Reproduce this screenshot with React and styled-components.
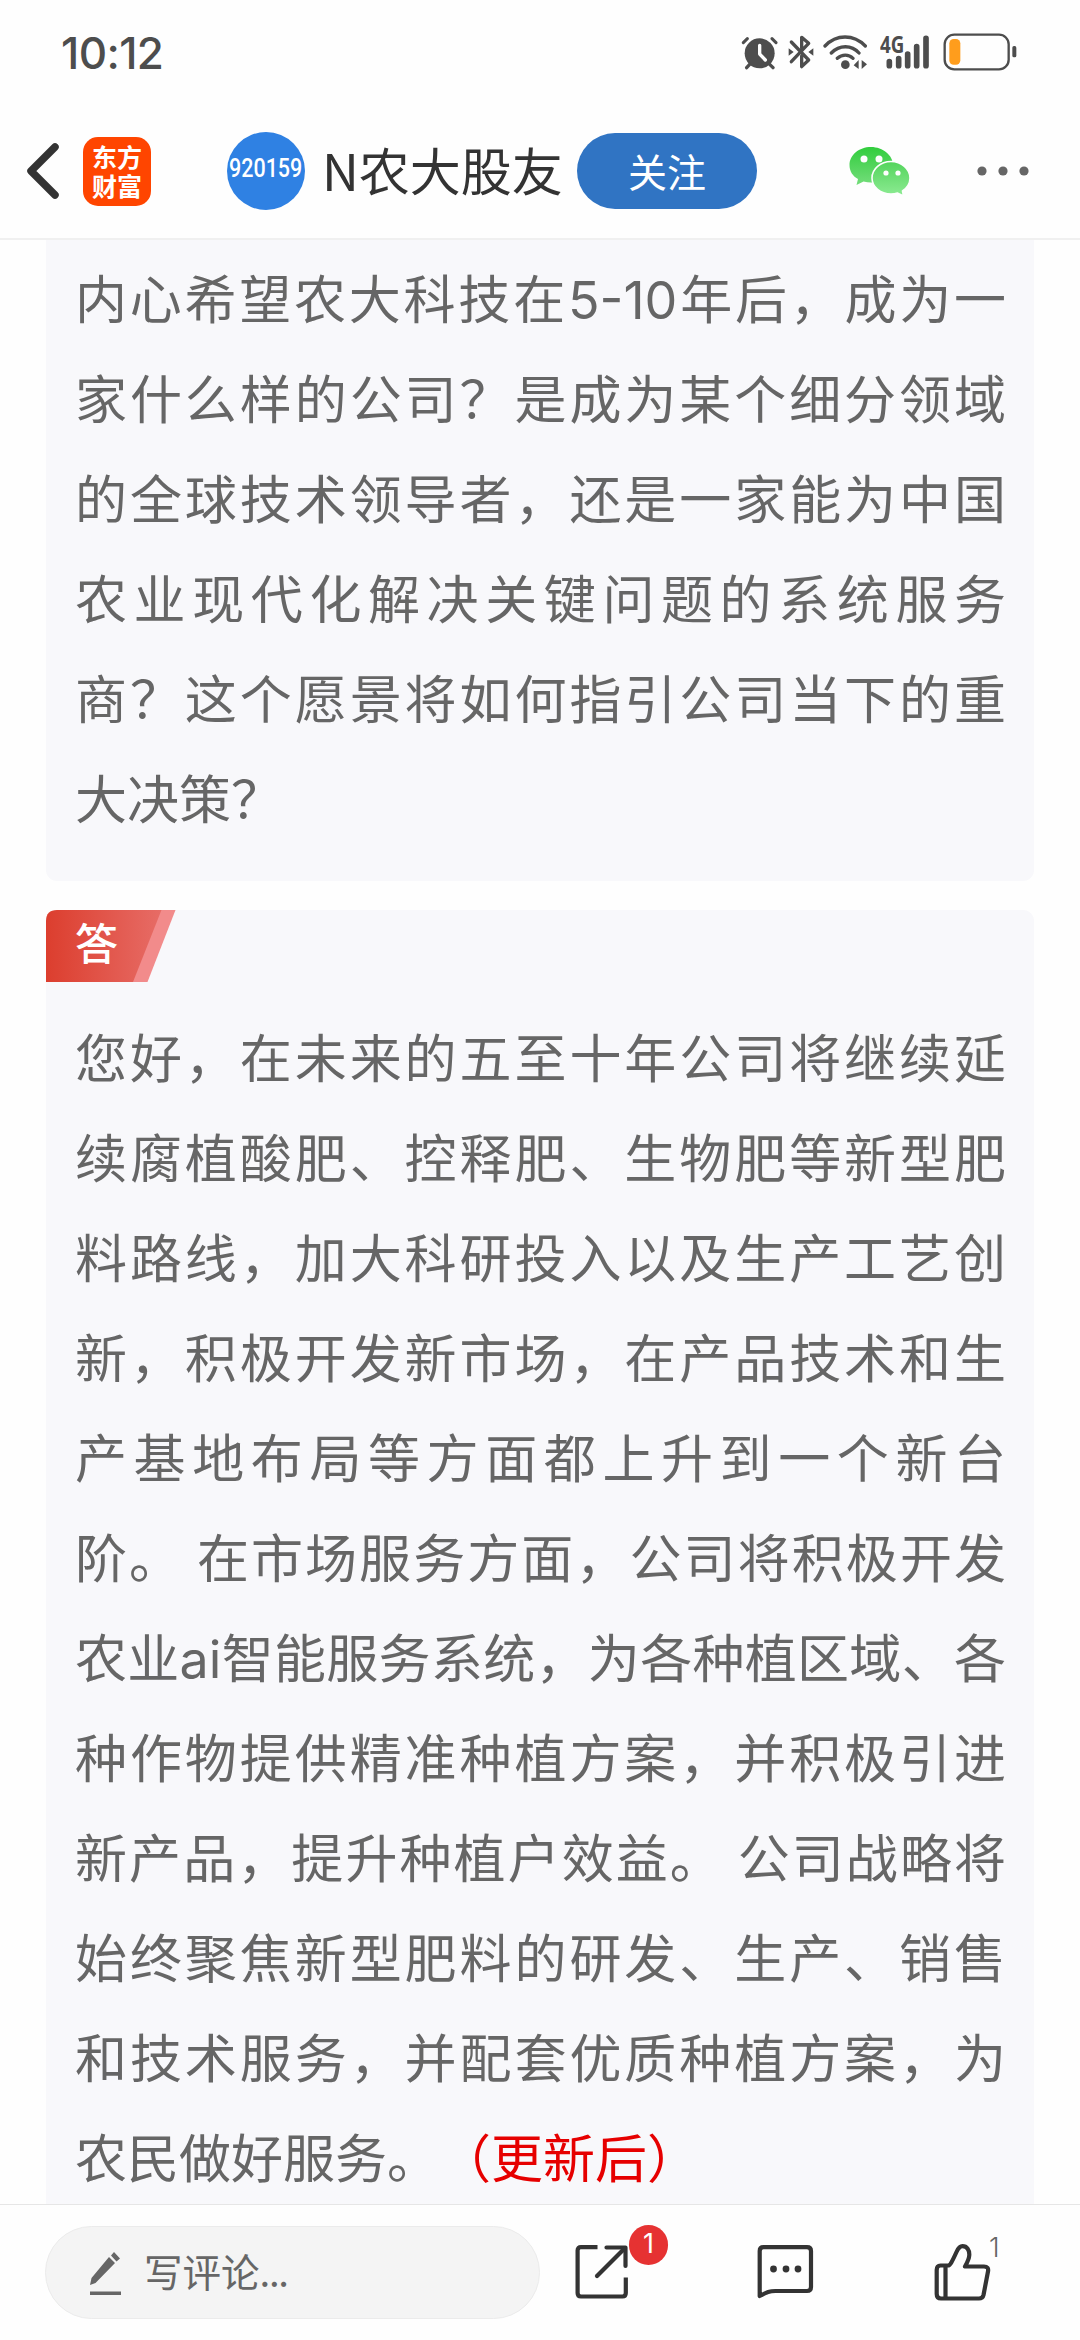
import React from "react"
import styled, { createGlobalStyle } from "styled-components"

const GlobalStyle = createGlobalStyle`
  * {
    box-sizing: border-box;
  }

  body {
    margin: 0;
    background: #fefefe;
    font-family: "Noto Sans CJK SC", "Noto Sans", sans-serif;
    text-spacing-trim: space-all;
  }
`

const Page = styled.div`
  display: flex;
  flex-direction: column;
  width: 1080px;
  height: 2340px;
  overflow: hidden;
  color: #333;
`

const StatusBar = styled.div`
  display: flex;
  align-items: center;
  justify-content: space-between;
  height: 104px;
  padding: 0 63px 0 61px;
`

const Clock = styled.span`
  padding-top: 2px;
  font-family: Inter, sans-serif;
  font-size: 44px;
  font-weight: 500;
  line-height: 60px;
  letter-spacing: -0.6px;
  color: #4d4d4d;
`

const StatusIcons = styled.div`
  display: flex;
  align-items: center;

  svg {
    display: block;
  }
`

const Network = styled.div`
  position: relative;
  margin: 0 14px 0 11px;
`

const NetworkLabel = styled.span`
  position: absolute;
  top: -1px;
  left: 1px;
  font-family: "Open Sans", sans-serif;
  font-size: 24px;
  font-weight: 700;
  line-height: 22px;
  color: #4d4d4d;
  transform: scaleX(0.78);
  transform-origin: left;
`

const Header = styled.header`
  display: flex;
  align-items: center;
  flex-shrink: 0;
  height: 136px;
  padding: 0 50px 0 26px;
  border-bottom: 2px solid #f0f0f0;

  > svg {
    flex-shrink: 0;
  }
`

const Logo = styled.div`
  display: flex;
  flex-direction: column;
  align-items: center;
  justify-content: center;
  width: 68px;
  height: 69px;
  margin-left: 23px;
  border-radius: 15px;
  background: #ff4500;
  color: #fff;
  font-size: 25px;
  font-weight: 700;
  line-height: 29px;
`

const Avatar = styled.div`
  display: flex;
  align-items: center;
  justify-content: center;
  width: 78px;
  height: 78px;
  margin-left: 76px;
  border-radius: 50%;
  background: #2f81e3;
  color: #fff;
`

const StockCode = styled.span`
  font-family: Roboto, sans-serif;
  font-size: 25px;
  font-weight: 500;
  line-height: 26px;
  transform: translateY(-2px) scaleX(0.86);
`

const Title = styled.h1`
  margin: 0 0 4px 17px;
  width: 255px;
  font-size: 51px;
  font-weight: 400;
  line-height: 70px;
  white-space: nowrap;
`

const FollowButton = styled.button`
  width: 180px;
  height: 76px;
  padding: 0 0 3px;
  border: 0;
  border-radius: 38px;
  background: #3074c3;
  color: #fff;
  font-family: inherit;
  font-size: 39px;
  line-height: 70px;
`

const Content = styled.main`
  display: flex;
  flex-direction: column;
  flex: 1;
  gap: 29px;
  min-height: 0;
  padding: 0 46px;
  overflow: hidden;
`

const Card = styled.section`
  flex-shrink: 0;
  padding: ${props => (props.$first ? "7px 28px 34px 29px" : "0 28px 40px 29px")};
  border-radius: ${props => (props.$first ? "0 0 11px 11px" : "11px")};
  background: #f8f8fb;
`

const Line = styled.p`
  margin: 0;
  height: 100px;
  font-size: 52px;
  line-height: 100px;
  color: #666;
  white-space: nowrap;
  text-align-last: ${props => (props.$last ? "left" : "justify")};
`

const Latin = styled.span`
  font-family: Inter, sans-serif;
`

const Updated = styled.span`
  color: #e60000;
`

const AnswerTag = styled.div`
  display: grid;
  width: 130px;
  height: 72px;
  margin: 0 0 24px -29px;

  > * {
    grid-area: 1 / 1;
  }
`

const AnswerLabel = styled.span`
  padding-left: 29px;
  color: #fff;
  font-size: 43px;
  font-weight: 500;
  line-height: 62px;
`

const Footer = styled.footer`
  display: flex;
  align-items: flex-start;
  flex-shrink: 0;
  height: 136px;
  padding: 21px 45px 0;
  border-top: 1px solid #e6e6e6;
`

const CommentBox = styled.div`
  display: flex;
  align-items: center;
  gap: 22px;
  width: 495px;
  height: 93px;
  padding-left: 43px;
  border: 1px solid #ebebeb;
  border-radius: 47px;
  background: #f4f4f4;
  color: #666;
`

const Placeholder = styled.span`
  padding-bottom: 6px;
  font-size: 38.5px;
  line-height: 60px;

  i {
    font-style: normal;
    letter-spacing: -1.3px;
  }
`

const Action = styled.div`
  position: relative;
  height: 60px;
  margin: ${props => props.$top || 18}px 0 0 ${props => props.$gap}px;

  svg {
    display: block;
  }
`

const Badge = styled.span`
  position: absolute;
  top: -19px;
  left: 54px;
  width: 39px;
  height: 40px;
  border-radius: 20px;
  background: #e63232;
  color: #fff;
  font-family: Inter, sans-serif;
  font-size: 27px;
  line-height: 38px;
  text-align: center;
`

const LikeCount = styled.span`
  position: absolute;
  top: -10px;
  left: 55px;
  color: #666;
  font-family: Inter, sans-serif;
  font-size: 27px;
  font-weight: 300;
  line-height: 30px;
`

const AlarmIcon = () => (
  <svg width="38" height="36" viewBox="0 0 114 108" fill="none" stroke="#4d4d4d" strokeLinecap="round">
    <circle cx="56" cy="58" r="45" fill="#4d4d4d" stroke="none" />
    <path d="M7 26 19 14M93 14 105 26" strokeWidth="9" />
    <path d="M26 91 17 101M86 91 96 101" strokeWidth="10" />
    <path d="M56 34V60L73 78" stroke="#fefefe" strokeWidth="10" strokeLinejoin="round" />
  </svg>
)

const BluetoothIcon = () => (
  <svg width="26" height="36" viewBox="0 0 78 108">
    <path
      d="M10 24 62 78 41 98V66M41 42V10L62 28 10 83"
      fill="none"
      stroke="#4d4d4d"
      strokeWidth="10"
      strokeLinecap="round"
      strokeLinejoin="round"
    />
    <path d="M2 43 17 54 2 65ZM76 43 61 54 76 65Z" fill="#4d4d4d" />
  </svg>
)

const WifiIcon = () => (
  <svg width="45" height="36" viewBox="0 0 135 108" fill="none" stroke="#4d4d4d" strokeWidth="10" strokeLinecap="round">
    <path d="M6 36C40 0 92 0 127 36M25 57C49 32 86 32 108 57M43 73C57 60 77 60 90 73" />
    <circle cx="67" cy="92" r="13" fill="#4d4d4d" stroke="none" />
    <path d="M107 78V105L92 94ZM116 105V78L132 91Z" fill="#4d4d4d" stroke="none" />
  </svg>
)

const SignalIcon = () => (
  <svg width="50" height="36" viewBox="0 0 150 108" stroke="#4d4d4d" strokeWidth="17" strokeLinecap="round">
    <path d="M31 83V95M59 74V95M86 60V95M113 38V95M141 13V95" />
  </svg>
)

const BatteryIcon = () => (
  <svg width="74" height="38" viewBox="0 0 222 114">
    <rect x="5" y="5" width="192" height="104" rx="29" fill="none" stroke="#4d4d4d" strokeWidth="7" />
    <rect x="19" y="18" width="33" height="77" rx="13" fill="#ff9d1c" />
    <rect x="208" y="39" width="12" height="34" rx="5" fill="#4d4d4d" />
  </svg>
)

const BackIcon = () => (
  <svg width="34" height="58" viewBox="0 0 34 58">
    <path d="M29 5 5 29 29 53" fill="none" stroke="#333" strokeWidth="7.5" strokeLinecap="round" strokeLinejoin="round" />
  </svg>
)

const HeaderIcon = styled.svg`
  margin-left: ${props => props.$gap}px;
`

const WechatIcon = () => (
  <HeaderIcon $gap={92} width="62" height="50" viewBox="0 0 62 50">
    <defs>
      <linearGradient id="bubble" x1="0" y1="0" x2="0" y2="1">
        <stop offset="0" stopColor="#31cd3d" />
        <stop offset="1" stopColor="#74dd7b" />
      </linearGradient>
      <linearGradient id="bubbleSmall" x1="0" y1="0" x2="0" y2="1">
        <stop offset="0" stopColor="#53d45c" />
        <stop offset="1" stopColor="#8deb93" />
      </linearGradient>
    </defs>
    <path
      d="M22 1C10 1 .5 9 .5 19c0 6 3 11 8.500 14L7.500 39l7-3.500c2.500.7 5 1 7.500 1 12 0 22-8 22-17.500S34 1 22 1Z"
      fill="url(#bubble)"
    />
    <path
      d="M42 15.500c-10.500 0-19 7.500-19 16.500s8.500 16 19 16c2.300 0 4.500-.3 6.500-1L54.500 50l-1-5c4.500-3 7.500-7.500 7.500-13 0-9-8.500-16.500-19-16.500Z"
      fill="url(#bubbleSmall)"
      stroke="#fefefe"
      strokeWidth="1.6"
    />
    <g fill="#fefefe">
      <circle cx="15" cy="13" r="3.5" />
      <circle cx="30" cy="13" r="3.5" />
      <circle cx="37" cy="27" r="2.6" />
      <circle cx="49" cy="27" r="2.6" />
    </g>
  </HeaderIcon>
)

const MoreIcon = () => (
  <HeaderIcon $gap={66} width="52" height="10" viewBox="0 0 52 10" fill="#666">
    <circle cx="5" cy="5" r="4.6" />
    <circle cx="26" cy="5" r="4.6" />
    <circle cx="47" cy="5" r="4.6" />
  </HeaderIcon>
)

const TagShape = () => (
  <svg width="130" height="72" viewBox="0 0 130 72">
    <defs>
      <linearGradient id="tag" x1="0" x2="1">
        <stop offset="0" stopColor="#dc3e2e" />
        <stop offset="1" stopColor="#e76c66" />
      </linearGradient>
    </defs>
    <path d="M110 0H129.500L101.500 72H80Z" fill="#f28b8b" />
    <path d="M11 0H115.500L87 72H0V11Q0 0 11 0Z" fill="url(#tag)" />
  </svg>
)

const PencilIcon = () => (
  <svg width="33" height="44" viewBox="0 0 33 44" fill="#666">
    <path d="M20 6 26 12 6.500 32 1 34 2.500 27ZM22 4.500 25 1 31 7.500 27.500 10.500Z" />
    <rect x="1" y="40.5" width="31" height="3.5" />
  </svg>
)

const ShareIcon = () => (
  <svg width="54" height="56" viewBox="0 0 54 56" fill="none" stroke="#333" strokeWidth="4.2">
    <path d="M22.500 3.100H6Q2.600 3.100 2.600 6.500V49Q2.600 52.500 6 52.500H47.500Q50.800 52.500 50.800 49V33.500" />
    <path d="M31.500 3.500H50.500V22" strokeLinecap="round" strokeLinejoin="round" />
    <path d="M49.500 4.500 22 32" strokeLinecap="round" />
  </svg>
)

const MessageIcon = () => (
  <svg width="57" height="56" viewBox="0 0 57 56">
    <path
      d="M2.700 52V7Q2.700 3.200 6.500 3.200H50Q54 3.200 54 7V43Q54 47 50 47H18.500C12 47 9.500 48.500 2.700 52Z"
      fill="none"
      stroke="#333"
      strokeWidth="4.2"
      strokeLinejoin="round"
    />
    <g fill="#333">
      <circle cx="16.5" cy="25" r="3.4" />
      <circle cx="29" cy="25" r="3.4" />
      <circle cx="41" cy="25" r="3.4" />
    </g>
  </svg>
)

const LikeIcon = () => (
  <svg width="57" height="60" viewBox="0 0 57 60" fill="none" stroke="#333" strokeWidth="4.2" strokeLinejoin="round">
    <path d="M6.500 22.500H14C16 22.500 17.500 20 22.500 9 24.500 4.500 26 3.200 28.500 3.200 33 3.200 35.500 7 35.300 12 35.200 16 33 20 31 23.500H50Q55 23.500 54 28.500L49.500 52Q48.700 55.500 45 55.500H7Q2.700 55.500 2.700 51V27Q2.700 22.500 6.500 22.500Z" />
    <path d="M11.500 23V55" />
  </svg>
)

const question = [
  "内心希望农大科技在5-10年后，成为一",
  "家什么样的公司？是成为某个细分领域",
  "的全球技术领导者，还是一家能为中国",
  "农业现代化解决关键问题的系统服务",
  "商？这个愿景将如何指引公司当下的重",
  "大决策？",
]

const answer = [
  "您好，在未来的五至十年公司将继续延",
  "续腐植酸肥、控释肥、生物肥等新型肥",
  "料路线，加大科研投入以及生产工艺创",
  "新，积极开发新市场，在产品技术和生",
  "产基地布局等方面都上升到一个新台",
  "阶。 在市场服务方面，公司将积极开发",
  "农业ai智能服务系统，为各种植区域、各",
  "种作物提供精准种植方案，并积极引进",
  "新产品，提升种植户效益。 公司战略将",
  "始终聚焦新型肥料的研发、生产、销售",
  "和技术服务，并配套优质种植方案，为",
]

// latin letters and digits get their own face
const renderLine = text =>
  text
    .split(/([a-z0-9-]+)/)
    .map((part, i) => (i % 2 ? <Latin key={i}>{part}</Latin> : part))

const App = () => (
  <Page>
    <GlobalStyle />
    <StatusBar>
      <Clock>10:12</Clock>
      <StatusIcons>
        <AlarmIcon />
        <svg width="9" height="1" />
        <BluetoothIcon />
        <svg width="9" height="1" />
        <WifiIcon />
        <Network>
          <NetworkLabel>4G</NetworkLabel>
          <SignalIcon />
        </Network>
        <BatteryIcon />
      </StatusIcons>
    </StatusBar>

    <Header>
      <BackIcon />
      <Logo>
        <span>东方</span>
        <span>财富</span>
      </Logo>
      <Avatar>
        <StockCode>920159</StockCode>
      </Avatar>
      <Title>N农大股友</Title>
      <FollowButton>关注</FollowButton>
      <WechatIcon />
      <MoreIcon />
    </Header>

    <Content>
      <Card $first>
        {question.map((text, i) => (
          <Line key={text} $last={i === question.length - 1}>
            {renderLine(text)}
          </Line>
        ))}
      </Card>
      <Card>
        <AnswerTag>
          <TagShape />
          <AnswerLabel>答</AnswerLabel>
        </AnswerTag>
        {answer.map(text => (
          <Line key={text}>{renderLine(text)}</Line>
        ))}
        <Line $last>
          农民做好服务。<Updated>（更新后）</Updated>
        </Line>
      </Card>
    </Content>

    <Footer>
      <CommentBox>
        <PencilIcon />
        <Placeholder>
          写评论<i>...</i>
        </Placeholder>
      </CommentBox>
      <Action $gap={35}>
        <ShareIcon />
        <Badge>1</Badge>
      </Action>
      <Action $gap={128}>
        <MessageIcon />
      </Action>
      <Action $gap={120} $top={17}>
        <LikeIcon />
        <LikeCount>1</LikeCount>
      </Action>
    </Footer>
  </Page>
)

export default App
